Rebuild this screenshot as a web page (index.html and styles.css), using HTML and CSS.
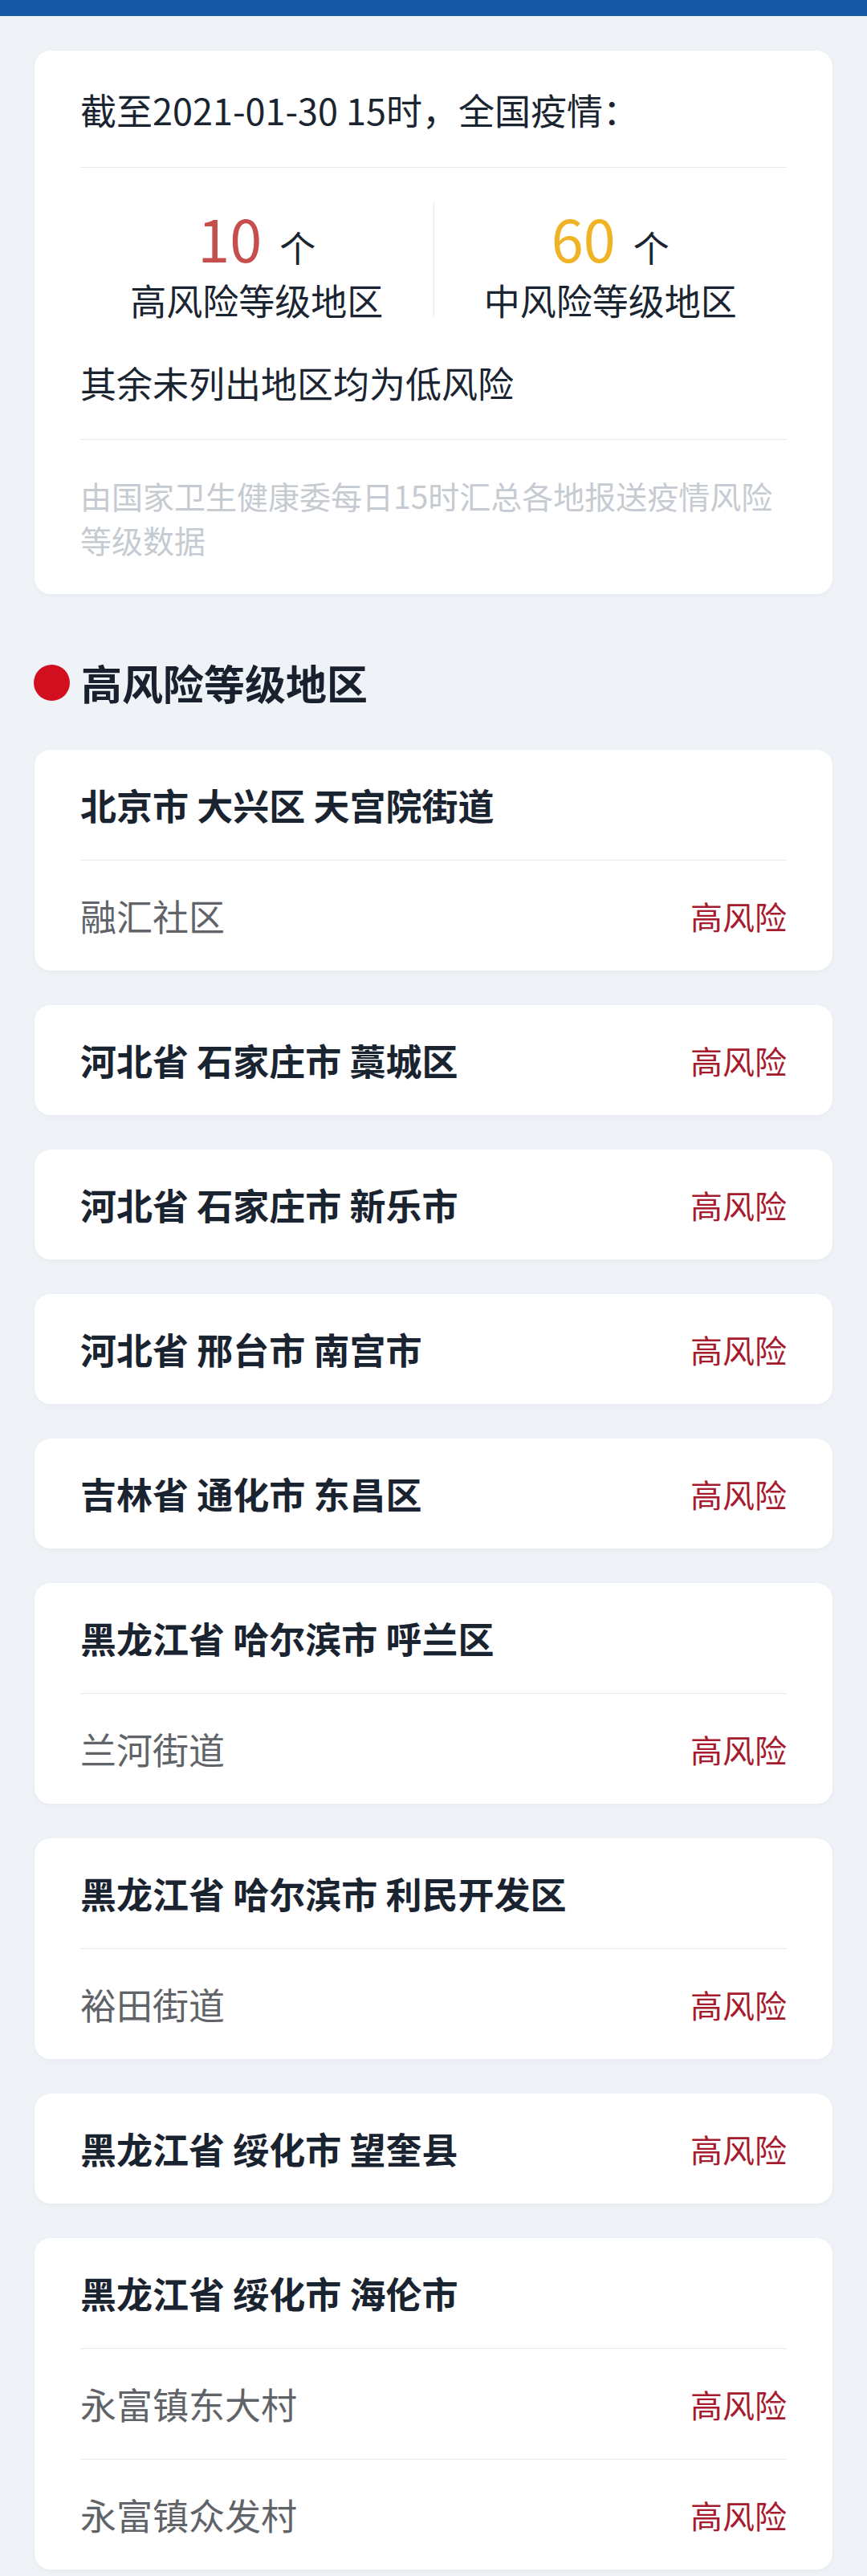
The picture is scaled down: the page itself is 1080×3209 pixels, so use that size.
FILE: index.html
```html
<!DOCTYPE html>
<html lang="zh-CN">
<head>
<meta charset="utf-8">
<title>全国疫情风险等级</title>
<link rel="stylesheet" href="styles.css">
</head>
<body>
<div class="topbar"></div>
<main class="page">
  <section class="card summary">
    <div class="summary-date">截至2021-01-30 15时，全国疫情：</div>
    <div class="stats">
      <div class="stat">
        <div class="stat-num"><span class="num num-high">10</span><span class="unit">个</span></div>
        <div class="stat-label">高风险等级地区</div>
      </div>
      <div class="stat-divider"></div>
      <div class="stat">
        <div class="stat-num"><span class="num num-mid">60</span><span class="unit">个</span></div>
        <div class="stat-label">中风险等级地区</div>
      </div>
    </div>
    <div class="summary-note">其余未列出地区均为低风险</div>
    <div class="summary-source">由国家卫生健康委每日15时汇总各地报送疫情风险等级数据</div>
  </section>

  <h2 class="section-title"><span class="dot"></span>高风险等级地区</h2>

  <section class="card area">
    <div class="row"><span class="area-name">北京市 大兴区 天宫院街道</span></div>
    <div class="row"><span class="sub-name">融汇社区</span><span class="risk">高风险</span></div>
  </section>
  <section class="card area">
    <div class="row"><span class="area-name">河北省 石家庄市 藁城区</span><span class="risk">高风险</span></div>
  </section>
  <section class="card area">
    <div class="row"><span class="area-name">河北省 石家庄市 新乐市</span><span class="risk">高风险</span></div>
  </section>
  <section class="card area">
    <div class="row"><span class="area-name">河北省 邢台市 南宫市</span><span class="risk">高风险</span></div>
  </section>
  <section class="card area">
    <div class="row"><span class="area-name">吉林省 通化市 东昌区</span><span class="risk">高风险</span></div>
  </section>
  <section class="card area">
    <div class="row"><span class="area-name">黑龙江省 哈尔滨市 呼兰区</span></div>
    <div class="row"><span class="sub-name">兰河街道</span><span class="risk">高风险</span></div>
  </section>
  <section class="card area">
    <div class="row"><span class="area-name">黑龙江省 哈尔滨市 利民开发区</span></div>
    <div class="row"><span class="sub-name">裕田街道</span><span class="risk">高风险</span></div>
  </section>
  <section class="card area">
    <div class="row"><span class="area-name">黑龙江省 绥化市 望奎县</span><span class="risk">高风险</span></div>
  </section>
  <section class="card area">
    <div class="row"><span class="area-name">黑龙江省 绥化市 海伦市</span></div>
    <div class="row"><span class="sub-name">永富镇东大村</span><span class="risk">高风险</span></div>
    <div class="row"><span class="sub-name">永富镇众发村</span><span class="risk">高风险</span></div>
  </section>
</main>
</body>
</html>
```

FILE: styles.css
```css
* {
  box-sizing: border-box;
}

html, body {
  margin: 0;
  padding: 0;
}

body {
  background: #eff2f6;
  font-family: "Noto Sans CJK SC", "Noto Sans", sans-serif;
  color: #1b2431;
  font-size: 45px;
  line-height: 64px;
}

.topbar {
  height: 20px;
  background: #1558a5;
}

.page {
  padding: 43px 43px 8px;
}

.card {
  background: #ffffff;
  border-radius: 20px;
  box-shadow: 0 2px 6px rgba(30, 50, 80, 0.04);
}

.summary {
  padding: 42px 57px 40px;
}

.summary-date {
  padding-bottom: 39px;
  border-bottom: 1px solid #e6e8eb;
}

.stats {
  display: grid;
  grid-template-columns: 1fr 1px 1fr;
  margin-top: 43px;
}

.stat {
  display: flex;
  flex-direction: column;
  align-items: center;
}

.stat-divider {
  height: 143px;
  background: #e9eaec;
}

.stat-num {
  display: flex;
  align-items: baseline;
  line-height: 88px;
  height: 88px;
}

.num {
  font-size: 72px;
}

.num-high {
  color: #c64f4e;
}

.num-mid {
  color: #efb325;
}

.unit {
  font-size: 45px;
  margin-left: 22px;
  color: #1b2431;
}

.stat-label {
  margin-top: 2px;
}

.summary-note {
  margin-top: 39px;
  padding-bottom: 38px;
  border-bottom: 1px solid #e6e8eb;
}

.summary-source {
  margin-top: 42px;
  font-size: 39px;
  line-height: 55px;
  color: #c6cbd1;
}

.section-title {
  display: flex;
  align-items: center;
  gap: 14px;
  margin: 75px 0 49px;
  font-size: 51px;
  line-height: 70px;
  font-weight: 700;
  color: #18212d;
}

.dot {
  width: 45px;
  height: 45px;
  border-radius: 50%;
  background: #d10f1f;
  flex: none;
  margin-left: -1px;
}

.area {
  margin-bottom: 43px;
  padding: 0 57px;
}

.area:last-child {
  margin-bottom: 0;
}

.row {
  display: flex;
  align-items: center;
  justify-content: space-between;
  height: 137px;
}

.row + .row {
  height: 138px;
  border-top: 1px solid #e6e8eb;
}

.area-name {
  font-weight: 700;
  color: #1a2330;
}

.sub-name {
  color: #606368;
}

.risk {
  font-size: 40px;
  color: #a61c2f;
}
```
